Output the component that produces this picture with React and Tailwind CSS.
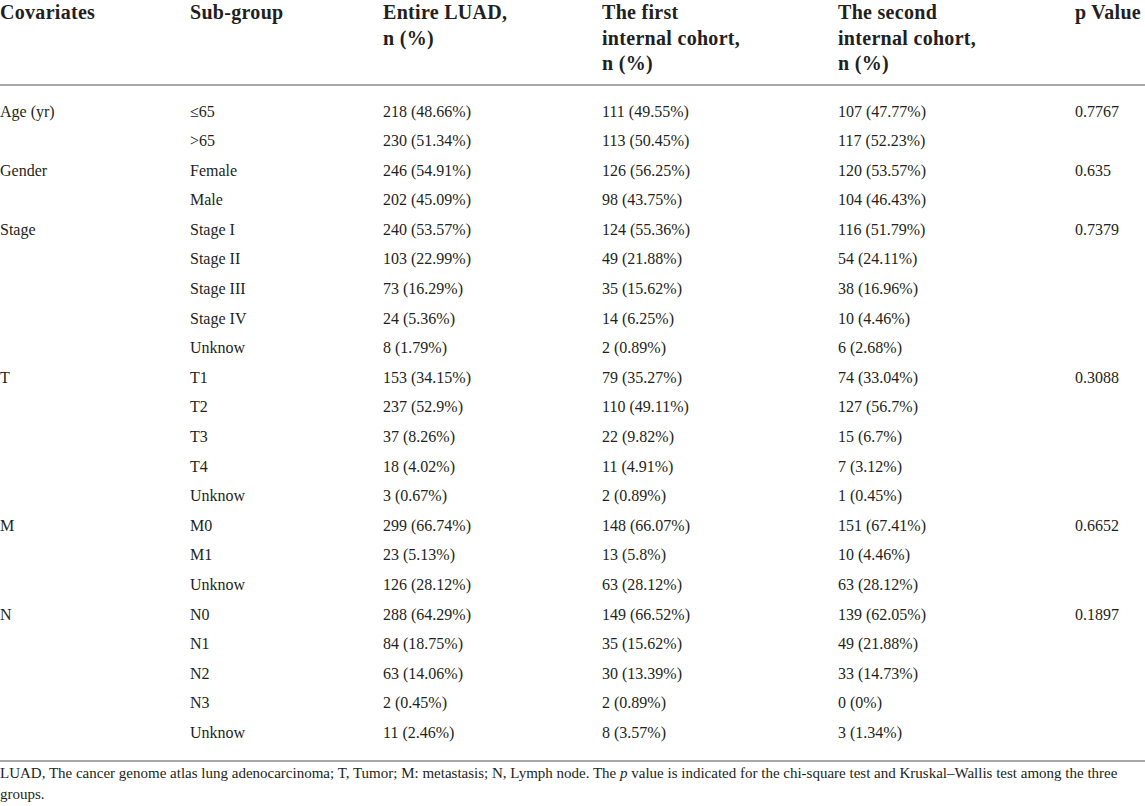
import React from 'react';

const groups = [
  { name: 'Age (yr)', p: '0.7767', rows: [
    ['≤65', '218 (48.66%)', '111 (49.55%)', '107 (47.77%)'],
    ['>65', '230 (51.34%)', '113 (50.45%)', '117 (52.23%)'],
  ] },
  { name: 'Gender', p: '0.635', rows: [
    ['Female', '246 (54.91%)', '126 (56.25%)', '120 (53.57%)'],
    ['Male', '202 (45.09%)', '98 (43.75%)', '104 (46.43%)'],
  ] },
  { name: 'Stage', p: '0.7379', rows: [
    ['Stage I', '240 (53.57%)', '124 (55.36%)', '116 (51.79%)'],
    ['Stage II', '103 (22.99%)', '49 (21.88%)', '54 (24.11%)'],
    ['Stage III', '73 (16.29%)', '35 (15.62%)', '38 (16.96%)'],
    ['Stage IV', '24 (5.36%)', '14 (6.25%)', '10 (4.46%)'],
    ['Unknow', '8 (1.79%)', '2 (0.89%)', '6 (2.68%)'],
  ] },
  { name: 'T', p: '0.3088', rows: [
    ['T1', '153 (34.15%)', '79 (35.27%)', '74 (33.04%)'],
    ['T2', '237 (52.9%)', '110 (49.11%)', '127 (56.7%)'],
    ['T3', '37 (8.26%)', '22 (9.82%)', '15 (6.7%)'],
    ['T4', '18 (4.02%)', '11 (4.91%)', '7 (3.12%)'],
    ['Unknow', '3 (0.67%)', '2 (0.89%)', '1 (0.45%)'],
  ] },
  { name: 'M', p: '0.6652', rows: [
    ['M0', '299 (66.74%)', '148 (66.07%)', '151 (67.41%)'],
    ['M1', '23 (5.13%)', '13 (5.8%)', '10 (4.46%)'],
    ['Unknow', '126 (28.12%)', '63 (28.12%)', '63 (28.12%)'],
  ] },
  { name: 'N', p: '0.1897', rows: [
    ['N0', '288 (64.29%)', '149 (66.52%)', '139 (62.05%)'],
    ['N1', '84 (18.75%)', '35 (15.62%)', '49 (21.88%)'],
    ['N2', '63 (14.06%)', '30 (13.39%)', '33 (14.73%)'],
    ['N3', '2 (0.45%)', '2 (0.89%)', '0 (0%)'],
    ['Unknow', '11 (2.46%)', '8 (3.57%)', '3 (1.34%)'],
  ] },
];

export default function App() {
  return (
    <div className="w-[1145px] bg-white text-[#231f20] font-['Liberation_Serif','DejaVu_Serif',serif]">
      <table className="w-full table-fixed border-collapse">
        <colgroup>
          <col className="w-[190px]" />
          <col className="w-[193px]" />
          <col className="w-[219px]" />
          <col className="w-[236px]" />
          <col className="w-[237px]" />
          <col className="w-[70px]" />
        </colgroup>
        <thead>
          <tr className="border-b-2 border-[#a8a8a8] align-top text-left text-[20px] font-bold leading-[25.5px] tracking-[0.3px]">
            <th className="pb-[7px]">Covariates</th>
            <th className="pb-[7px]">Sub-group</th>
            <th className="pb-[7px]">Entire LUAD,<br />n (%)</th>
            <th className="pb-[7px]">The first<br />internal cohort,<br />n (%)</th>
            <th className="pb-[7px]">The second<br />internal cohort,<br />n (%)</th>
            <th className="pb-[7px] whitespace-nowrap">p Value</th>
          </tr>
        </thead>
        <tbody className="text-[16px] leading-[29.6px]">
          <tr><td colSpan={6} className="h-[12px] p-0" /></tr>
          {groups.map((g) =>
            g.rows.map((r, i) => (
              <tr key={g.name + r[0]} className="h-[29.6px]">
                <td>{i === 0 ? g.name : ''}</td>
                <td>{r[0]}</td>
                <td>{r[1]}</td>
                <td>{r[2]}</td>
                <td>{r[3]}</td>
                <td>{i === 0 ? g.p : ''}</td>
              </tr>
            ))
          )}
          <tr><td colSpan={6} className="h-[12px] p-0" /></tr>
        </tbody>
      </table>
      <p className="border-t-2 border-[#a8a8a8] pt-[1px] text-[15px] leading-[21px]">
        LUAD, The cancer genome atlas lung adenocarcinoma; T, Tumor; M: metastasis; N, Lymph node. The <i>p</i> value is indicated for the chi-square test and Kruskal–Wallis test among the three groups.
      </p>
    </div>
  );
}
